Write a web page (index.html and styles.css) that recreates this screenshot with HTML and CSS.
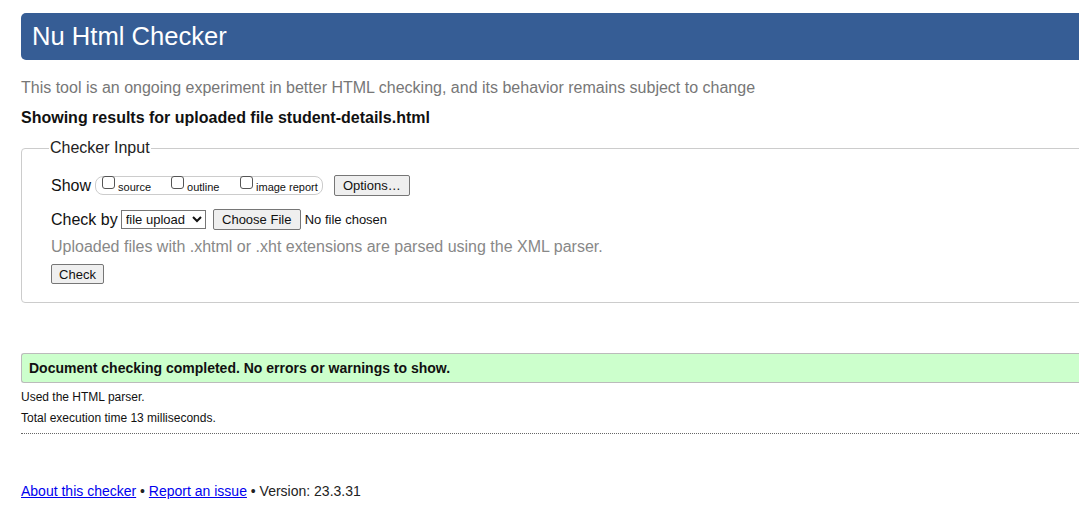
FILE: index.html
```html
<!DOCTYPE html>
<html>
<head>
<meta charset="utf-8">
<link rel="stylesheet" href="styles.css">
</head>
<body>
<div class="page">
  <h1 class="title">Nu Html Checker</h1>
  <p class="intro">This tool is an ongoing experiment in better HTML checking, and its behavior remains subject to change</p>
  <p class="showing">Showing results for uploaded file student-details.html</p>
  <fieldset class="input">
    <legend>Checker Input</legend>
    <div class="row show-row">
      <span class="lbl">Show</span>
      <span class="opts">
        <label class="opt o1"><input type="checkbox">source</label>
        <label class="opt o2"><input type="checkbox">outline</label>
        <label class="opt o3"><input type="checkbox">image report</label>
      </span>
      <button class="btn options">Options…</button>
    </div>
    <div class="row check-row">
      <span class="lbl">Check by</span>
      <select class="sel"><option>file upload</option></select>
      <button class="btn choose">Choose File</button>
      <span class="nofile">No file chosen</span>
    </div>
    <p class="note">Uploaded files with .xhtml or .xht extensions are parsed using the XML parser.</p>
    <button class="btn check">Check</button>
  </fieldset>
  <div class="success">Document checking completed. No errors or warnings to show.</div>
  <p class="meta">Used the HTML parser.</p>
  <p class="meta second">Total execution time 13 milliseconds.</p>
  <div class="rule"></div>
  <p class="footer"><a href="#">About this checker</a> • <a href="#">Report an issue</a> • Version: 23.3.31</p>
</div>
</body>
</html>
```
FILE: styles.css
```css
html, body {
  margin: 0;
  padding: 0;
  background: #fff;
  overflow: hidden;
}
body {
  font-family: "Liberation Sans", Arial, sans-serif;
  color: #111;
}
.page {
  width: 1200px;
  padding: 13px 0 0 21px;
}
.title {
  margin: 0;
  height: 47px;
  box-sizing: border-box;
  background: #365d95;
  color: #fff;
  font-weight: normal;
  font-size: 25.6px;
  line-height: 47px;
  padding-left: 11px;
  border-radius: 5px 0 0 5px;
}
.intro {
  margin: 19px 0 0;
  font-size: 16px;
  line-height: 18px;
  color: #777;
}
.showing {
  margin: 12px 0 0;
  font-size: 16px;
  line-height: 18px;
  font-weight: bold;
  color: #111;
}
.input {
  margin: 12px 0 0;
  border: 1px solid #ccc;
  border-radius: 4px;
  padding: 10px 29px 18px 29px;
  min-width: 0;
}
.input legend {
  font-size: 16px;
  padding: 0 1px;
  margin-left: -2px;
  color: #222;
}
.row {
  display: flex;
  align-items: center;
}
.lbl {
  font-size: 16px;
  color: #111;
}
.show-row {
  height: 21px;
  margin-top: 8px;
}
.opts {
  display: flex;
  align-items: center;
  margin-left: 4px;
  height: 17px;
  border: 1px solid #ccc;
  border-radius: 8px;
  padding: 0 4px 0 6px;
  white-space: nowrap;
}
.opt {
  display: flex;
  align-items: baseline;
  font-size: 11px;
  line-height: 13px;
  color: #111;
  white-space: nowrap;
  margin-top: 1px;
}
.opt input {
  -webkit-appearance: none;
  appearance: none;
  margin: 0 3px 0 0;
  width: 13px;
  height: 13px;
  flex: none;
  border: 1px solid #555;
  border-radius: 3px;
  background: #fff;
  position: relative;
  top: -2px;
}
.o1 { width: 69px; }
.o2 { width: 69px; }
.btn {
  font-family: "Liberation Sans", Arial, sans-serif;
  font-size: 13px;
  color: #111;
  background: #efefef;
  border: 1px solid #767676;
  border-radius: 2px;
  padding: 1px 6px;
  height: 20px;
}
.options {
  margin-left: 11px;
  width: 76px;
  height: 21px;
}
.check-row {
  margin-top: 13px;
  height: 21px;
}
.sel {
  font-family: "Liberation Sans", Arial, sans-serif;
  font-size: 13px;
  color: #111;
  margin-left: 3px;
  height: 19px;
  width: 85px;
  border: 1px solid #767676;
  border-radius: 0;
  background: #fff;
  padding: 0;
}
.choose {
  margin-left: 7px;
  width: 88px;
  height: 21px;
}
.nofile {
  margin-left: 4px;
  font-size: 13px;
  color: #111;
}
.note {
  margin: 8px 0 0;
  font-size: 16px;
  line-height: 18px;
  color: #888;
}
.check {
  margin-top: 8px;
  width: 53px;
}
.success {
  margin-top: 50px;
  background: #ccffcc;
  border: 1px solid #bbb;
  border-right: none;
  border-radius: 3px 0 0 3px;
  height: 30px;
  box-sizing: border-box;
  padding-left: 7px;
  font-size: 14px;
  font-weight: bold;
  line-height: 28px;
  color: #111;
}
.meta {
  margin: 0;
  font-size: 12px;
  line-height: 14px;
  margin-top: 7px;
  color: #111;
}
.meta.second {
  margin-top: 7px;
}
.rule {
  margin-top: 8px;
  border-top: 1px dotted #666;
}
.footer {
  margin: 49px 0 0;
  font-size: 14px;
  color: #222;
}
.footer a {
  color: #0000ee;
}
```
